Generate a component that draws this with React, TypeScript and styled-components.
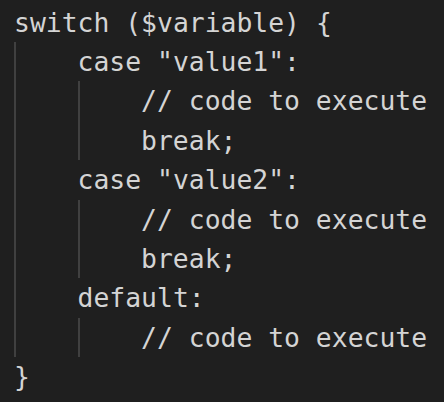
import React from "react";
import styled, { createGlobalStyle } from "styled-components";

const Global = createGlobalStyle`
  html, body {
    margin: 0;
    padding: 0;
    background: #1f1f1f;
  }
  #root {
    min-height: 100vh;
    background: #1f1f1f;
  }
`;

const Editor = styled.div`
  display: flex;
  flex-direction: column;
  padding: 2.6px 0 0 14px;
  font-family: "DejaVu Sans Mono", "Liberation Mono", monospace;
  font-size: 26.4px;
  line-height: 39.4px;
  color: #d4d4d4;
  white-space: pre;
`;

const Line = styled.div`
  display: flex;
  height: 39.4px;
`;

const Guide = styled.span`
  display: inline-block;
  box-sizing: border-box;
  width: 4ch;
  height: 100%;
  border-left: 2px solid #404040;
  flex: none;
`;

const Code = styled.span`
  flex: none;
`;

const lines: { indent: number; text: string }[] = [
  { indent: 0, text: "switch ($variable) {" },
  { indent: 1, text: "case \"value1\":" },
  { indent: 2, text: "// code to execute" },
  { indent: 2, text: "break;" },
  { indent: 1, text: "case \"value2\":" },
  { indent: 2, text: "// code to execute" },
  { indent: 2, text: "break;" },
  { indent: 1, text: "default:" },
  { indent: 2, text: "// code to execute" },
  { indent: 0, text: "}" },
];

export default function App() {
  return (
    <>
      <Global />
      <Editor>
        {lines.map((l, i) => (
          <Line key={i}>
            {Array.from({ length: l.indent }).map((_, g) => (
              <Guide key={g} />
            ))}
            <Code>{l.text}</Code>
          </Line>
        ))}
      </Editor>
    </>
  );
}
